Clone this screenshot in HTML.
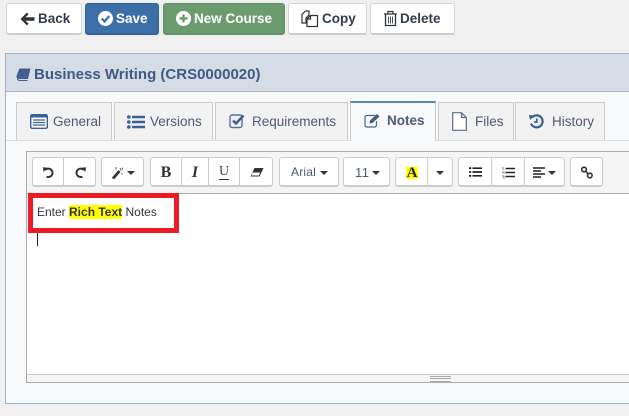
<!DOCTYPE html>
<html><head><meta charset="utf-8"><style>
html,body{margin:0;padding:0}
body{width:629px;height:416px;overflow:hidden;position:relative;background:#f0f0f0;font-family:"Liberation Sans",sans-serif}
.a{position:absolute;box-sizing:border-box}
.btn{position:absolute;box-sizing:border-box;top:3px;height:32px;border-radius:3px;border:1px solid #d4d4d4;border-bottom:2px solid #ccc;background:#fff;color:#333c4d;font-weight:bold;font-size:13.5px;line-height:30px;white-space:nowrap}
.btn span{position:absolute;top:0}
.btn svg{position:absolute}
.tab{position:absolute;box-sizing:border-box;top:102px;height:38px;background:#f2f2f2;border:1px solid #ccc;border-bottom:none;color:#4d5a73;font-size:13.5px;line-height:37px;white-space:nowrap}
.tab span{position:absolute;top:0}
.tab svg{position:absolute}
.t{position:absolute;box-sizing:border-box;top:157px;height:30px;background:#fff;border:1px solid #ccc;border-bottom:2px solid #ccc;border-radius:3px;font-size:12px;color:#333;line-height:29px}
.t svg{position:absolute}
.t span{position:absolute;top:0}
.c{position:absolute;width:0;height:0;border-left:4.5px solid transparent;border-right:4.5px solid transparent;border-top:4px solid #333}
</style></head><body>

<div class="btn" style="left:6px;width:76px"><svg style="left:13px;top:8px" width="15" height="14" viewBox="0 0 15 14"><path d="M7 0.5 L0.5 7 L7 13.5 L8.5 11.5 L5.5 8.8 H14.5 V5.2 H5.5 L8.5 2.5Z" fill="#333"/></svg><span style="left:31px">Back</span></div>
<div class="btn" style="left:85px;width:74px;background:#3c6ea8;border-color:#35639a;color:#fff"><svg style="left:12px;top:7px" width="15" height="15" viewBox="0 0 15 15"><circle cx="7.5" cy="7.5" r="7.5" fill="#fff"/><path d="M3.8 7.5 L6.5 10.5 L11.3 5" fill="none" stroke="#3c6ea8" stroke-width="2.2"/></svg><span style="left:30px">Save</span></div>
<div class="btn" style="left:163px;width:122px;background:#6c9c6e;border-color:#62906a;color:#fff"><svg style="left:12px;top:7px" width="15" height="15" viewBox="0 0 15 15"><circle cx="7.5" cy="7.5" r="7.5" fill="#fff"/><path d="M7.5 3.5V11.5M3.5 7.5H11.5" stroke="#6c9c6e" stroke-width="2.4"/></svg><span style="left:30px">New Course</span></div>
<div class="btn" style="left:288px;width:79px"><svg style="left:12px;top:6px" width="18" height="18" viewBox="0 0 18 18"><path d="M1 11 V4.5 L4.5 1 H8 V5 L5 8 V13 H1Z M9.5 5.5 H16.5 V16.5 H6 V9Z M9.5 5.5 V9 H6" fill="#fff" stroke="#333" stroke-width="1.2"/></svg><span style="left:33px">Copy</span></div>
<div class="btn" style="left:370px;width:85px"><svg style="left:12px;top:6px" width="15" height="17" viewBox="0 0 15 17"><path d="M1 4H14M5 4V1.5H10V4M2.5 4V15.5H12.5V4" fill="none" stroke="#333" stroke-width="1.3"/><path d="M5.5 6.5V13.5M7.5 6.5V13.5M9.5 6.5V13.5" stroke="#456" stroke-width="1"/></svg><span style="left:29px">Delete</span></div>

<div class="a" style="left:5px;top:53px;width:640px;height:351px;background:#f7f9fb;border:1px solid #9fb4c9"></div>
<div class="a" style="left:6px;top:54px;width:630px;height:38px;background:#d5dce6;border-bottom:1px solid #a4b4c6"></div>
<svg class="a" style="left:16px;top:68px" width="15" height="13" viewBox="0 0 15 13"><path d="M3.5 0.5H14.5L12 11H2.5C0.5 11 0.2 9 0.8 7Z" fill="#3f5f8f"/><path d="M1.5 10.5C1.5 12 2.5 12.5 4 12.5H11.5" fill="none" stroke="#3f5f8f"/></svg>
<div class="a" style="left:34px;top:66px;font-size:15px;font-weight:bold;color:#3f5b85;white-space:nowrap;line-height:18px">Business Writing (CRS0000020)</div>

<div class="a" style="left:6px;top:140px;width:630px;height:1px;background:#dcdcdc"></div>

<div class="tab" style="left:16px;width:96px"><svg style="left:13px;top:11px" width="18" height="15" viewBox="0 0 18 15"><rect x="0.7" y="0.7" width="16.6" height="13.6" rx="1.5" fill="#fff" stroke="#3a5f95" stroke-width="1.4"/><rect x="1" y="1" width="16" height="2.5" fill="#3a5f95"/><path d="M3 6H15M3 8.5H15M3 11H15" stroke="#3a5f95" stroke-width="1.2"/></svg><span style="left:36px">General</span></div>
<div class="tab" style="left:114px;width:99px"><svg style="left:12px;top:12px" width="18" height="14" viewBox="0 0 18 14"><path d="M5 2H18M5 7H18M5 12H18" stroke="#3a5f95" stroke-width="2.4"/><circle cx="1.8" cy="2" r="1.8" fill="#3a5f95"/><circle cx="1.8" cy="7" r="1.8" fill="#3a5f95"/><circle cx="1.8" cy="12" r="1.8" fill="#3a5f95"/></svg><span style="left:35px">Versions</span></div>
<div class="tab" style="left:215px;width:133px"><svg style="left:13px;top:10px" width="17" height="16" viewBox="0 0 17 16"><rect x="1" y="2" width="12" height="12.5" rx="2" fill="none" stroke="#54709a" stroke-width="1.4"/><path d="M4 7.5L7 10.5L14.5 2.5" fill="none" stroke="#3a5f95" stroke-width="2.4"/></svg><span style="left:36px">Requirements</span></div>
<div class="tab" style="left:350px;top:101px;width:86px;height:40px;background:#f7f9fb;border-top:2px solid #5a8aa5;font-weight:bold;line-height:36px"><svg style="left:13px;top:10px" width="17" height="15" viewBox="0 0 17 15"><path d="M11 2.5H3A2 2 0 0 0 1 4.5V12A2 2 0 0 0 3 14H10.5A2 2 0 0 0 12.5 12V8" fill="none" stroke="#3a6a9a" stroke-width="1.2"/><path d="M5.5 10.5L6 7.5L13 1L15.5 3.5L8.5 10Z" fill="#4d5a73"/></svg><span style="left:36px">Notes</span></div>
<div class="tab" style="left:438px;width:76px"><svg style="left:13px;top:9px" width="15" height="19" viewBox="0 0 15 19"><path d="M0.7 0.7H9.5L14.3 5.5V18.3H0.7Z M9.5 0.7V5.5H14.3" fill="#fff" stroke="#5a6b8a" stroke-width="1.2"/></svg><span style="left:36px">Files</span></div>
<div class="tab" style="left:515px;width:90px"><svg style="left:13px;top:11px" width="15" height="15" viewBox="0 0 15 15"><path d="M3 3.5A6 6 0 1 1 2 9.5" fill="none" stroke="#3a5f95" stroke-width="2.2"/><path d="M0 1L5.5 1.5L1 6Z" fill="#3a5f95"/><path d="M7.8 4.5V8H5" fill="none" stroke="#3a5f95" stroke-width="1.7"/></svg><span style="left:36px">History</span></div>

<div class="a" style="left:26px;top:151px;width:620px;height:232px;background:#fff;border:1px solid #aaa"></div>
<div class="a" style="left:27px;top:152px;width:610px;height:42px;background:#f5f5f5;border-bottom:1px solid #aaa"></div>
<div class="a" style="left:27px;top:374px;width:610px;height:8px;background:#f5f5f5;border-top:1px solid #ccc"></div>
<div class="a" style="left:430px;top:376px;width:21px;height:6px;border-top:1px solid #aaa;border-bottom:1px solid #aaa"></div>
<div class="a" style="left:430px;top:378px;width:21px;height:1px;background:#aaa"></div>

<div class="t" style="left:32px;width:32px;border-radius:3px 0 0 3px"><svg style="left:10px;top:9px" width="11" height="11" viewBox="0 0 11 11"><path d="M2.2 3A4.2 4.2 0 1 1 3.5 9.6" fill="none" stroke="#333" stroke-width="2"/><path d="M0 0.3L4.6 0.8L0.5 5Z" fill="#333"/></svg></div>
<div class="t" style="left:63px;width:33px;border-radius:0 3px 3px 0"><svg style="left:11px;top:9px" width="11" height="11" viewBox="0 0 11 11"><path d="M8.8 3A4.2 4.2 0 1 0 7.5 9.6" fill="none" stroke="#333" stroke-width="2"/><path d="M11 0.3L6.4 0.8L10.5 5Z" fill="#333"/></svg></div>
<div class="t" style="left:101px;width:43px"><svg style="left:10px;top:9px" width="11" height="12" viewBox="0 0 11 12"><path d="M1 11.5L7.5 4" stroke="#333" stroke-width="2.8"/><path d="M8 1L9.5 3.5M4 0V2.5M10.5 0.5V2.5M10 6V7.5" stroke="#666" stroke-width="1.1"/></svg><div class="c" style="left:25px;top:13px"></div></div>
<div class="t" style="left:150px;width:32px;border-radius:3px 0 0 3px;font:bold 16px/29px 'Liberation Serif',serif;text-align:center">B</div>
<div class="t" style="left:181px;width:28px;border-radius:0;font:italic bold 16px/29px 'Liberation Serif',serif;text-align:center">I</div>
<div class="t" style="left:208px;width:32px;border-radius:0;font:14px/27px 'Liberation Serif',serif;text-align:center;color:#444"><span style="position:static;border-bottom:1px solid #333">U</span></div>
<div class="t" style="left:239px;width:34px;border-radius:0 3px 3px 0"><svg style="left:10px;top:10px" width="14" height="9" viewBox="0 0 14 9"><path d="M4.5 0H13.5L9.5 8.5H0.5Z" fill="#333"/><path d="M2.6 4.5L1.6 7.5H8.8L10.2 4.5Z" fill="#fff"/></svg></div>
<div class="t" style="left:279px;width:60px;color:#4a5a70"><span style="left:11px;letter-spacing:.2px">Arial</span><div class="c" style="left:40px;top:13px"></div></div>
<div class="t" style="left:343px;width:47px;color:#4a5a70"><span style="left:11px;font-size:13px;letter-spacing:.5px">11</span><div class="c" style="left:28px;top:13px"></div></div>
<div class="t" style="left:395px;width:33px;border-radius:3px 0 0 3px"><span style="left:10px;top:9px;width:12px;height:12px;background:#ff0;font:bold 15px/13px 'Liberation Serif',serif;text-align:center;color:#222">A</span></div>
<div class="t" style="left:427px;width:26px;border-radius:0 3px 3px 0"><div class="c" style="left:8px;top:13px"></div></div>
<div class="t" style="left:458px;width:34px;border-radius:3px 0 0 3px"><svg style="left:10px;top:9px" width="13" height="10" viewBox="0 0 13 10"><path d="M3.5 1.2H13M3.5 5H13M3.5 8.8H13" stroke="#222" stroke-width="1.7"/><path d="M0 1.2H2.2M0 5H2.2M0 8.8H2.2" stroke="#222" stroke-width="1.8"/></svg></div>
<div class="t" style="left:491px;width:34px;border-radius:0"><svg style="left:10px;top:9px" width="13" height="12" viewBox="0 0 13 12"><path d="M3.5 1.5H13M3.5 5.5H13M3.5 9.5H13" stroke="#222" stroke-width="1.6"/><path d="M1 0V3M0 5H2V7M0 9H2V12" stroke="#777" stroke-width=".9" fill="none"/></svg></div>
<div class="t" style="left:524px;width:41px;border-radius:0 3px 3px 0"><svg style="left:8px;top:9px" width="12" height="11" viewBox="0 0 12 11"><path d="M0 1H12M0 4H8M0 7H12M0 10H8" stroke="#222" stroke-width="1.6"/></svg><div class="c" style="left:23px;top:13px"></div></div>
<div class="t" style="left:570px;width:33px"><svg style="left:10px;top:8px" width="12" height="13" viewBox="0 0 12 13"><circle cx="3" cy="3.5" r="2.3" fill="none" stroke="#333" stroke-width="1.6"/><circle cx="8.8" cy="9.5" r="2.3" fill="none" stroke="#333" stroke-width="1.6"/><path d="M4.5 5L7.2 8" stroke="#333" stroke-width="1.6"/></svg></div>

<div class="a" style="left:28px;top:193px;width:151px;height:40px;border:5px solid #ed1c24"></div>
<div class="a" style="left:37px;top:205px;font-size:12px;line-height:14px;color:#333;white-space:nowrap">Enter <b style="background:#ff0;font-weight:bold;padding:0">Rich Text</b> Notes</div>
<div class="a" style="left:37px;top:233px;width:1px;height:13px;background:#222"></div>

</body></html>
